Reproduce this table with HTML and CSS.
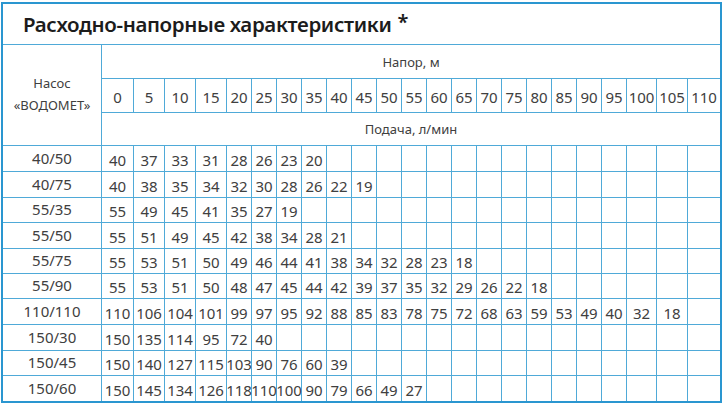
FILE: index.html
```html
<!DOCTYPE html>
<html lang="ru">
<head>
<meta charset="utf-8">
<title>Расходно-напорные характеристики</title>
<link rel="stylesheet" href="styles.css">
</head>
<body>
<div class="sheet">
  <div class="title">Расходно-напорные характеристики <span class="star">*</span></div>

  <div class="pump-head">Насос<br>«ВОДОМЕТ»</div>
  <div class="span-head">Напор, м</div>
  <div class="c">0</div><div class="c">5</div><div class="c">10</div><div class="c">15</div><div class="c">20</div><div class="c">25</div><div class="c">30</div><div class="c">35</div><div class="c">40</div><div class="c">45</div><div class="c">50</div><div class="c">55</div><div class="c">60</div><div class="c">65</div><div class="c">70</div><div class="c">75</div><div class="c">80</div><div class="c">85</div><div class="c">90</div><div class="c">95</div><div class="c">100</div><div class="c">105</div><div class="c">110</div>
  <div class="span-head">Подача, л/мин</div>

  <div class="lbl">40/50</div>
  <div class="c">40</div><div class="c">37</div><div class="c">33</div><div class="c">31</div><div class="c">28</div><div class="c">26</div><div class="c">23</div><div class="c">20</div><div class="c"></div><div class="c"></div><div class="c"></div><div class="c"></div><div class="c"></div><div class="c"></div><div class="c"></div><div class="c"></div><div class="c"></div><div class="c"></div><div class="c"></div><div class="c"></div><div class="c"></div><div class="c"></div><div class="c"></div>

  <div class="lbl">40/75</div>
  <div class="c">40</div><div class="c">38</div><div class="c">35</div><div class="c">34</div><div class="c">32</div><div class="c">30</div><div class="c">28</div><div class="c">26</div><div class="c">22</div><div class="c">19</div><div class="c"></div><div class="c"></div><div class="c"></div><div class="c"></div><div class="c"></div><div class="c"></div><div class="c"></div><div class="c"></div><div class="c"></div><div class="c"></div><div class="c"></div><div class="c"></div><div class="c"></div>

  <div class="lbl">55/35</div>
  <div class="c">55</div><div class="c">49</div><div class="c">45</div><div class="c">41</div><div class="c">35</div><div class="c">27</div><div class="c">19</div><div class="c"></div><div class="c"></div><div class="c"></div><div class="c"></div><div class="c"></div><div class="c"></div><div class="c"></div><div class="c"></div><div class="c"></div><div class="c"></div><div class="c"></div><div class="c"></div><div class="c"></div><div class="c"></div><div class="c"></div><div class="c"></div>

  <div class="lbl">55/50</div>
  <div class="c">55</div><div class="c">51</div><div class="c">49</div><div class="c">45</div><div class="c">42</div><div class="c">38</div><div class="c">34</div><div class="c">28</div><div class="c">21</div><div class="c"></div><div class="c"></div><div class="c"></div><div class="c"></div><div class="c"></div><div class="c"></div><div class="c"></div><div class="c"></div><div class="c"></div><div class="c"></div><div class="c"></div><div class="c"></div><div class="c"></div><div class="c"></div>

  <div class="lbl">55/75</div>
  <div class="c">55</div><div class="c">53</div><div class="c">51</div><div class="c">50</div><div class="c">49</div><div class="c">46</div><div class="c">44</div><div class="c">41</div><div class="c">38</div><div class="c">34</div><div class="c">32</div><div class="c">28</div><div class="c">23</div><div class="c">18</div><div class="c"></div><div class="c"></div><div class="c"></div><div class="c"></div><div class="c"></div><div class="c"></div><div class="c"></div><div class="c"></div><div class="c"></div>

  <div class="lbl">55/90</div>
  <div class="c">55</div><div class="c">53</div><div class="c">51</div><div class="c">50</div><div class="c">48</div><div class="c">47</div><div class="c">45</div><div class="c">44</div><div class="c">42</div><div class="c">39</div><div class="c">37</div><div class="c">35</div><div class="c">32</div><div class="c">29</div><div class="c">26</div><div class="c">22</div><div class="c">18</div><div class="c"></div><div class="c"></div><div class="c"></div><div class="c"></div><div class="c"></div><div class="c"></div>

  <div class="lbl">110/110</div>
  <div class="c">110</div><div class="c">106</div><div class="c">104</div><div class="c">101</div><div class="c">99</div><div class="c">97</div><div class="c">95</div><div class="c">92</div><div class="c">88</div><div class="c">85</div><div class="c">83</div><div class="c">78</div><div class="c">75</div><div class="c">72</div><div class="c">68</div><div class="c">63</div><div class="c">59</div><div class="c">53</div><div class="c">49</div><div class="c">40</div><div class="c">32</div><div class="c">18</div><div class="c"></div>

  <div class="lbl">150/30</div>
  <div class="c">150</div><div class="c">135</div><div class="c">114</div><div class="c">95</div><div class="c">72</div><div class="c">40</div><div class="c"></div><div class="c"></div><div class="c"></div><div class="c"></div><div class="c"></div><div class="c"></div><div class="c"></div><div class="c"></div><div class="c"></div><div class="c"></div><div class="c"></div><div class="c"></div><div class="c"></div><div class="c"></div><div class="c"></div><div class="c"></div><div class="c"></div>

  <div class="lbl">150/45</div>
  <div class="c">150</div><div class="c">140</div><div class="c">127</div><div class="c">115</div><div class="c">103</div><div class="c">90</div><div class="c">76</div><div class="c">60</div><div class="c">39</div><div class="c"></div><div class="c"></div><div class="c"></div><div class="c"></div><div class="c"></div><div class="c"></div><div class="c"></div><div class="c"></div><div class="c"></div><div class="c"></div><div class="c"></div><div class="c"></div><div class="c"></div><div class="c"></div>

  <div class="lbl">150/60</div>
  <div class="c">150</div><div class="c">145</div><div class="c">134</div><div class="c">126</div><div class="c">118</div><div class="c">110</div><div class="c">100</div><div class="c">90</div><div class="c">79</div><div class="c">66</div><div class="c">49</div><div class="c">27</div><div class="c"></div><div class="c"></div><div class="c"></div><div class="c"></div><div class="c"></div><div class="c"></div><div class="c"></div><div class="c"></div><div class="c"></div><div class="c"></div><div class="c"></div>
</div>
</body>
</html>
```
FILE: styles.css
```css
html, body {
  margin: 0;
  padding: 0;
  background: #ffffff;
}

body {
  font-family: "Noto Sans", "Liberation Sans", sans-serif;
  color: #404040;
}

.sheet {
  margin: 2px 0 0 1px;
  width: 721px;
  box-sizing: border-box;
  border: 2px solid #2a96d0;
  background: #4faad8;
  display: grid;
  grid-template-columns: 98px 31px 30px 30px 30px repeat(16, 24px) 29px 30px 32px;
  grid-template-rows: 40px 33px 33px 32px 25px 25px 24px 25px 24px 24px 25px 25px 24px 25px;
  gap: 1px;
}

.sheet > div {
  background: #ffffff;
  display: flex;
  align-items: center;
  justify-content: center;
  white-space: nowrap;
}

.title {
  grid-column: 1 / -1;
  justify-content: flex-start !important;
  padding-left: 20px;
  font-size: 20.5px;
  font-weight: 600;
  color: #1c1c1c;
  letter-spacing: -0.35px;
}

.star {
  margin-left: 6px;
  font-size: 20px;
  align-self: flex-start;
  margin-top: 4px;
}

.pump-head {
  grid-column: 1;
  grid-row: 2 / span 3;
  text-align: center;
  font-size: 13px;
  line-height: 22px;
  padding-bottom: 2px;
}

.span-head {
  grid-column: 2 / -1;
  font-size: 13px;
}

.c {
  font-size: 15px;
  padding-top: 2px;
}

.lbl {
  font-size: 15px;
  padding-bottom: 2px;
}
```
